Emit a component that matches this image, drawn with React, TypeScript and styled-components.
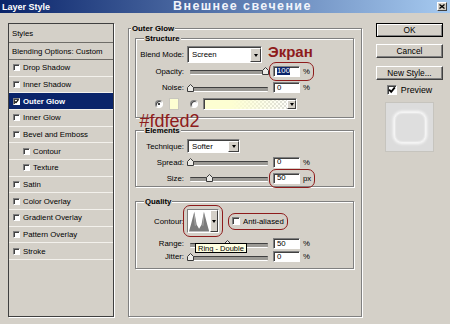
import styled, { createGlobalStyle } from "styled-components";

const RED = "#8e1b1b";

const GlobalStyle = createGlobalStyle`
  html, body { margin: 0; padding: 0; }
  body {
    background: #d4d0c8;
    font-family: "Liberation Sans", Arial, sans-serif;
    font-size: 7.8px;
    color: #000;
  }
  * { box-sizing: border-box; }
`;

const Window = styled.div`
  width: 450px;
  height: 324px;
  overflow: hidden;
  background: #d4d0c8;
`;

const TitleBar = styled.div`
  height: 13px;
  display: flex;
  align-items: center;
  padding: 0 3px 0 2px;
  background: linear-gradient(90deg, #0a246a 0%, #a6caf0 100%);
  color: #fff;
`;
const Caption = styled.span`
  width: 171px;
  font-size: 9px;
  font-weight: bold;
`;
const BigCaption = styled.span`
  font-size: 12.5px;
  line-height: 13px;
  font-weight: bold;
  letter-spacing: 1.4px;
  margin-top: -1px;
  color: #f1f4fb;
`;
const CloseBox = styled.span`
  margin-left: auto;
  width: 10px;
  height: 9px;
  background: #d4d0c8;
  border: 1px solid;
  border-color: #fff #404040 #404040 #fff;
  display: flex;
  align-items: center;
  justify-content: center;
`;

const Body = styled.div`
  display: flex;
  align-items: flex-start;
  padding: 10px 0 0 8px;
  gap: 14px;
`;

/* ---- styles list ---- */
const StylesPanel = styled.div`
  width: 106px;
  height: 294px;
  border: 1px solid #404040;
  box-shadow: 1px 1px 0 #fff;
  display: flex;
  flex-direction: column;
`;
const StyleRow = styled.div<{ $h?: number; $indent?: boolean; $active?: boolean; $head?: boolean }>`
  height: ${(p) => p.$h ?? 16.67}px;
  flex-shrink: 0;
  display: flex;
  align-items: center;
  gap: 3px;
  padding-left: ${(p) => (p.$head ? 3 : p.$indent ? 14 : 4)}px;
  border-bottom: 1px solid ${(p) => (p.$head ? "#6f6d68" : "#f3f1ec")};
  background: ${(p) => (p.$active ? "#0a246a" : "transparent")};
  color: ${(p) => (p.$active ? "#fff" : "#000")};
  font-weight: ${(p) => (p.$active ? "bold" : "normal")};
  white-space: nowrap;
`;
const Check = styled.span<{ $size?: number }>`
  width: ${(p) => p.$size ?? 7}px;
  height: ${(p) => p.$size ?? 7}px;
  flex-shrink: 0;
  background: #fff;
  border: 1px solid;
  border-color: #808080 #fff #fff #808080;
  box-shadow: inset 1px 1px 0 #404040;
  display: flex;
  align-items: center;
  justify-content: center;
`;

/* ---- group boxes ---- */
const Group = styled.div`
  position: relative;
  border: 1px solid #808080;
  box-shadow: inset 1px 1px 0 #fff, 1px 1px 0 #fff;
  display: flex;
  flex-direction: column;
`;
const OuterGroup = styled(Group)`
  width: 234px;
  height: 289px;
  margin-top: 5px;
  padding: 0 7px 0 6px;
`;
const InnerGroup = styled(Group)<{ $top: number; $pt: number; $pb: number }>`
  margin-top: ${(p) => p.$top}px;
  padding: 0 4px ${(p) => p.$pb}px 2px;
  & > div:nth-child(2) { margin-top: ${(p) => p.$pt}px; }
`;
const GroupTitle = styled.div<{ $indent: number }>`
  align-self: flex-start;
  height: 10px;
  line-height: 10px;
  margin: -5px 0 0 ${(p) => p.$indent}px;
  padding: 0 1px;
  background: #d4d0c8;
  font-weight: bold;
`;
const Row = styled.div<{ $h: number; $gap?: number }>`
  height: ${(p) => p.$h}px;
  margin-top: ${(p) => p.$gap ?? 0}px;
  display: flex;
  align-items: center;
  white-space: nowrap;
`;
const Label = styled.span`
  width: 46px;
  margin-right: 3px;
  text-align: right;
  flex-shrink: 0;
`;

/* ---- controls ---- */
const sunken = `
  background: #fff;
  border: 1px solid;
  border-color: #808080 #fff #fff #808080;
  box-shadow: inset 1px 1px 0 #404040;
`;
const Select = styled.div<{ $w: number; $h: number }>`
  ${sunken}
  width: ${(p) => p.$w}px;
  height: ${(p) => p.$h}px;
  display: flex;
  align-items: center;
  padding-left: 4px;
`;
const DropBtn = styled.span<{ $w?: number }>`
  align-self: stretch;
  width: ${(p) => p.$w ?? 11}px;
  margin: 1px 0 0 auto;
  background: #d4d0c8;
  border: 1px solid;
  border-color: #fff #404040 #404040 #fff;
  display: flex;
  align-items: center;
  justify-content: center;
  &::after {
    content: "";
    border-left: 2.5px solid transparent;
    border-right: 2.5px solid transparent;
    border-top: 3px solid #000;
  }
`;
const NumBox = styled.span`
  ${sunken}
  width: 27px;
  height: 11px;
  display: flex;
  align-items: center;
  padding-left: 3px;
  line-height: 8px;
`;
const Selected = styled.span`
  background: #0a246a;
  color: #fff;
`;
const Unit = styled.span`
  margin-left: 3px;
`;
const SliderBox = styled.span`
  position: relative;
  width: 84px;
  height: 100%;
  flex-shrink: 0;
  margin-right: 2px;
  &::before {
    content: "";
    position: absolute;
    left: 3px;
    right: 3px;
    top: 50%;
    height: 3px;
    margin-top: -1px;
    border-radius: 1px;
    background: #9c9a95;
    border-top: 1px solid #404040;
    border-bottom: 1px solid #fff;
  }
`;
const Thumb = styled.svg`
  position: absolute;
  top: 50%;
  margin-top: -4px;
  margin-left: -3.5px;
`;
const Annot = styled.span<{ $ml?: number }>`
  display: inline-flex;
  align-items: center;
  margin-left: ${(p) => p.$ml ?? 0}px;
  border-radius: 3px;
  outline: 1.5px solid ${RED};
  outline-offset: 3px;
`;
const Radio = styled.span<{ $on?: boolean; $ml: number }>`
  width: 8px;
  height: 8px;
  margin-left: ${(p) => p.$ml}px;
  border-radius: 50%;
  background: #fff;
  border: 1px solid;
  border-color: #808080 #fff #fff #808080;
  box-shadow: inset 1px 1px 0 #404040;
  display: flex;
  align-items: center;
  justify-content: center;
  &::after {
    content: "";
    width: 2px;
    height: 2px;
    border-radius: 50%;
    background: ${(p) => (p.$on ? "#000" : "transparent")};
  }
`;
const Swatch = styled.span`
  width: 10px;
  height: 12px;
  margin-left: 6px;
  background: #fdfed2;
  border: 1px solid #c8c6be;
`;
const GradientBox = styled.span`
  ${sunken}
  width: 94px;
  height: 12px;
  margin-left: 5px;
  display: flex;
  background:
    linear-gradient(90deg, #fdfed2 0%, #fdfed2 30%, rgba(253, 254, 210, 0) 100%),
    repeating-conic-gradient(#d8d8d8 0 25%, #fff 0 50%) 0 0 / 4px 4px;
`;
const ContourBox = styled.span`
  width: 32px;
  height: 24px;
  display: flex;
  border: 1px solid;
  border-color: #808080 #fff #fff #808080;
  background: #fff;
`;
const Tooltip = styled.span`
  position: absolute;
  left: 8px;
  top: 6px;
  height: 10px;
  padding: 0 2px;
  line-height: 9px;
  background: #ffffe1;
  border: 1px solid #000;
  font-size: 7.5px;
  z-index: 2;
`;
const Note = styled.span<{ $size: number; $bold?: boolean }>`
  color: ${RED};
  font-size: ${(p) => p.$size}px;
  font-weight: ${(p) => (p.$bold ? "bold" : "normal")};
  line-height: ${(p) => p.$size}px;
`;
const HexNote = styled(Note)`
  position: absolute;
  left: 10.5px;
  top: 83px;
`;

/* ---- right column ---- */
const SideColumn = styled.div`
  width: 67px;
  display: flex;
  flex-direction: column;
  align-items: center;
`;
const Button = styled.button<{ $default?: boolean; $top: number }>`
  width: 67px;
  height: 14px;
  margin-top: ${(p) => p.$top}px;
  padding: 0;
  font-family: inherit;
  font-size: 8.3px;
  color: #000;
  background: #d4d0c8;
  border: 1px solid;
  border-color: ${(p) => (p.$default ? "#000" : "#fff #404040 #404040 #fff")};
  box-shadow: ${(p) =>
    p.$default ? "inset 1px 1px 0 #fff, inset -1px -1px 0 #808080" : "inset -1px -1px 0 #808080"};
`;
const PreviewRow = styled.div`
  height: 16px;
  margin-top: 2px;
  display: flex;
  align-items: center;
  gap: 4px;
  font-size: 8.8px;
`;
const PreviewThumb = styled.div`
  width: 49px;
  height: 50px;
  margin-top: 4px;
  background: #dcdcdc;
  border: 1px solid #c6c4be;
  display: flex;
  align-items: center;
  justify-content: center;
`;
const PreviewShape = styled.div`
  width: 32px;
  height: 31px;
  border-radius: 8px;
  background: #dedede;
  border: 1px solid #f4f4f4;
  box-shadow: 0 0 3px 1px #fbfbfb, inset 0 0 2px #fff;
`;

const Tick = ({ size = 7 }: { size?: number }) => (
  <svg width={size - 2} height={size - 2} viewBox="0 0 7 7">
    <path d="M1 3.2 L2.8 5.2 L6 1.2" stroke="#000" strokeWidth="1.6" fill="none" />
  </svg>
);

const Slider = ({ value, children }: { value: number; children?: React.ReactNode }) => (
  <SliderBox>
    <Thumb width="8" height="8" viewBox="0 0 8 8" style={{ left: 3.5 + value * 75 }}>
      <polygon points="0.5,3.5 3.5,0.5 6.5,3.5 6.5,7.5 0.5,7.5" fill="#ecebe7" stroke="#3a3a3a" strokeWidth="1" />
    </Thumb>
    {children}
  </SliderBox>
);

const styleItems: { name: string; indent?: boolean; on?: boolean }[] = [
  { name: "Drop Shadow" },
  { name: "Inner Shadow" },
  { name: "Outer Glow", on: true },
  { name: "Inner Glow" },
  { name: "Bevel and Emboss" },
  { name: "Contour", indent: true },
  { name: "Texture", indent: true },
  { name: "Satin" },
  { name: "Color Overlay" },
  { name: "Gradient Overlay" },
  { name: "Pattern Overlay" },
  { name: "Stroke" },
];

export default function App() {
  return (
    <Window>
      <GlobalStyle />
      <TitleBar>
        <Caption>Layer Style</Caption>
        <BigCaption>Внешнее свечение</BigCaption>
        <CloseBox>
          <svg width="6" height="5" viewBox="0 0 6 5">
            <path d="M0.5 0.5 L5.5 4.5 M5.5 0.5 L0.5 4.5" stroke="#000" strokeWidth="1.3" />
          </svg>
        </CloseBox>
      </TitleBar>

      <Body>
        <StylesPanel>
          <StyleRow $head $h={19}>Styles</StyleRow>
          <StyleRow $head $h={17}>Blending Options: Custom</StyleRow>
          {styleItems.map((it) => (
            <StyleRow key={it.name} $indent={it.indent} $active={it.on}>
              <Check>{it.on && <Tick />}</Check>
              {it.name}
            </StyleRow>
          ))}
        </StylesPanel>

        <OuterGroup>
          <GroupTitle $indent={-4}>Outer Glow</GroupTitle>

          <InnerGroup $top={4} $pt={2.25} $pb={4.75}>
            <GroupTitle $indent={6}>Structure</GroupTitle>
            <Row $h={16.5}>
              <Label>Blend Mode:</Label>
              <Select $w={75} $h={16.5}>
                Screen
                <DropBtn />
              </Select>
              <Note $size={15} $bold style={{ marginLeft: 6, marginTop: -7 }}>
                Экран
              </Note>
            </Row>
            <Row $h={16.5}>
              <Label>Opacity:</Label>
              <Slider value={1} />
              <Annot>
                <NumBox>
                  <Selected>100</Selected>
                </NumBox>
                <Unit>%</Unit>
              </Annot>
            </Row>
            <Row $h={16.5}>
              <Label>Noise:</Label>
              <Slider value={0} />
              <NumBox>0</NumBox>
              <Unit>%</Unit>
            </Row>
            <Row $h={16.5}>
              <Radio $on $ml={17} />
              <Swatch />
              <Radio $ml={11} />
              <GradientBox>
                <DropBtn $w={9} />
              </GradientBox>
            </Row>
          </InnerGroup>

          <InnerGroup $top={12} $pt={2} $pb={0}>
            <GroupTitle $indent={6}>Elements</GroupTitle>
            <Row $h={16}>
              <Label>Technique:</Label>
              <Select $w={53} $h={14}>
                Softer
                <DropBtn />
              </Select>
            </Row>
            <Row $h={16}>
              <Label>Spread:</Label>
              <Slider value={0} />
              <NumBox>0</NumBox>
              <Unit>%</Unit>
            </Row>
            <Row $h={16}>
              <Label>Size:</Label>
              <Slider value={0.25} />
              <Annot>
                <NumBox>50</NumBox>
                <Unit>px</Unit>
              </Annot>
            </Row>
          </InnerGroup>

          <InnerGroup $top={14} $pt={1} $pb={5}>
            <GroupTitle $indent={6}>Quality</GroupTitle>
            <Row $h={26}>
              <Label>Contour:</Label>
              <Annot>
                <ContourBox>
                  <svg width="23" height="22" viewBox="0 0 23 22">
                    <path
                      d="M1 22 L3 15 L6.5 1.5 L9 15 L11.5 19 L14 15 L16.5 1.5 L20 15 L22 22 Z"
                      fill="#7b7b7b"
                    />
                    <path d="M6.5 5 L7.6 16 M16.5 5 L15.4 16" stroke="#b4b4b4" strokeWidth="0.8" />
                  </svg>
                  <DropBtn $w={8} style={{ margin: 0 }} />
                </ContourBox>
              </Annot>
              <Annot $ml={13}>
                <Check $size={8} style={{ marginRight: 3 }} />
                Anti-aliased
              </Annot>
            </Row>
            <Row $h={13} $gap={3}>
              <Label>Range:</Label>
              <Slider value={0.49}>
                <Tooltip>Ring - Double</Tooltip>
              </Slider>
              <NumBox>50</NumBox>
              <Unit>%</Unit>
            </Row>
            <Row $h={13}>
              <Label>Jitter:</Label>
              <Slider value={0} />
              <NumBox>0</NumBox>
              <Unit>%</Unit>
            </Row>
          </InnerGroup>

          <HexNote $size={18}>#fdfed2</HexNote>
        </OuterGroup>

        <SideColumn>
          <Button $default $top={0}>OK</Button>
          <Button $top={7}>Cancel</Button>
          <Button $top={8}>New Style...</Button>
          <PreviewRow>
            <Check $size={10}>
              <Tick size={10} />
            </Check>
            Preview
          </PreviewRow>
          <PreviewThumb>
            <PreviewShape />
          </PreviewThumb>
        </SideColumn>
      </Body>
    </Window>
  );
}
